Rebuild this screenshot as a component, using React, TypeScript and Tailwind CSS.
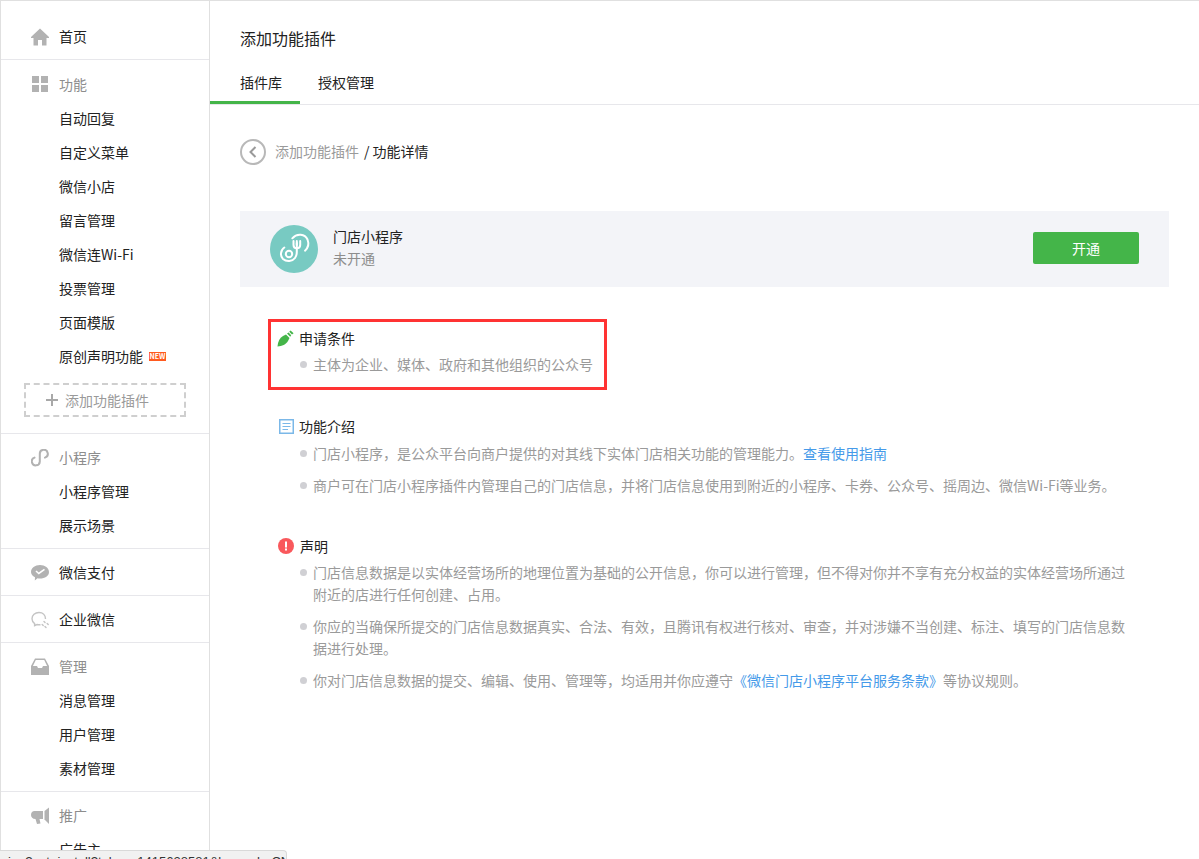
import type { ReactNode } from "react";

const font = '"Noto Sans CJK SC", "Noto Sans", sans-serif';

function Home() {
  return (
    <svg width="18" height="18" viewBox="0 0 18 18" fill="#b2b2b2">
      <path d="M9 0.5 L18 9 L18 10 L15.5 10 L15.5 17.5 L11 17.5 L11 12 L7 12 L7 17.5 L2.5 17.5 L2.5 10 L0 10 L0 9 Z" />
    </svg>
  );
}

function Grid() {
  return (
    <svg width="16" height="16" viewBox="0 0 16 16" fill="#b2b2b2" className="mb-[2px]">
      <rect x="0" y="0" width="7" height="7" />
      <rect x="9" y="0" width="7" height="7" />
      <rect x="0" y="9" width="7" height="7" />
      <rect x="9" y="9" width="7" height="7" />
    </svg>
  );
}

function MiniApp() {
  return (
    <svg width="18" height="18" viewBox="0 0 18 18" fill="none" stroke="#b2b2b2" strokeWidth="2" strokeLinecap="round">
      <path d="M3.5 8.6 A4 4 0 1 0 8.8 12.6 L8.8 5 A4 4 0 1 1 14 8.6" />
    </svg>
  );
}

function Pay() {
  return (
    <svg width="18" height="18" viewBox="0 0 18 18">
      <path d="M9 1 C14 1 18 4 18 8 C18 12 14 14.5 9 14.5 C8 14.5 7 14.3 6.5 14.2 L3.8 16.5 L4 13.3 C1.5 12.1 0 10.2 0 8 C0 4 4 1 9 1 Z" fill="#b2b2b2" />
      <path d="M5 7 L7.8 9.5 L13.5 5.3" fill="none" stroke="#fff" strokeWidth="1.6" />
    </svg>
  );
}

function Wework() {
  return (
    <svg width="18" height="18" viewBox="0 0 18 18" fill="none" stroke="#c4c4c4" strokeWidth="1.4">
      <path d="M14.5 8 C14.5 4 11.8 1.5 8 1.5 C4 1.5 1 4.3 1 7.8 C1 10 2.2 11.6 3.6 12.6 L3.6 14.6 L6 13.5 C7 13.8 8 13.9 9.5 13.7" />
      <path d="M13 10.6 L14 11.6 M16.2 12.6 L17.2 13.6 M11.2 13.6 L12.2 14.6 M14 15.6 L15 16.6" strokeLinecap="round" />
    </svg>
  );
}

function Inbox() {
  return (
    <svg width="18" height="18" viewBox="0 0 18 18" fill="#b2b2b2">
      <path fillRule="evenodd" d="M4 0.5 L14 0.5 L18 8 L18 17 L0 17 L0 8 Z M4.8 2 L1.9 8 L6 8 L7 10 L11 10 L12 8 L16.1 8 L13.2 2 Z" />
    </svg>
  );
}

function Megaphone() {
  return (
    <svg width="18" height="18" viewBox="0 0 18 18" fill="#b2b2b2">
      <path d="M3.5 4 L12 4 L12 12 L8.5 12 L9.5 16.5 L6 17 L4.5 12 C1.5 12 0 10 0 8 C0 5.5 1.5 4 3.5 4 Z" />
      <path d="M13.5 4 L18 0.5 L18 17 L13.5 12.5 Z" />
    </svg>
  );
}

function Section({ icon, label, muted, children }: { icon: ReactNode; label: string; muted?: boolean; children?: ReactNode }) {
  return (
    <div>
      <div className="flex h-[34px] items-center pl-[30px]">
        <span className="mr-[10px] flex w-[18px] justify-center">{icon}</span>
        <span className={`pb-[2px] ${muted ? "text-[#8d8d8d]" : "text-[#222]"}`}>{label}</span>
      </div>
      {children}
    </div>
  );
}

function Item({ children }: { children: ReactNode }) {
  return <div className="flex h-[34px] items-center pb-[2px] pl-[58px] text-[#222]">{children}</div>;
}

function Bullet({ children }: { children: ReactNode }) {
  return (
    <div className="relative pl-[34px] leading-[22px]">
      <span className="absolute left-[21px] top-[8px] h-[7px] w-[7px] rounded-full bg-[#d0d0d4]" />
      {children}
    </div>
  );
}

export default function App() {
  return (
    <div className="relative h-[859px] w-[1199px] overflow-hidden border-t border-t-[#e0e0e0] bg-white text-[14px]" style={{ fontFamily: font }}>
      <div className="flex h-[900px]">
        {/* Sidebar */}
        <aside className="w-[210px] shrink-0 border-x border-x-[#e0e0e0]">
          <div className="border-b border-[#e7e7eb] pb-[5px] pt-[19px]">
            <Section icon={<Home />} label="首页" />
          </div>
          <div className="border-b border-[#e7e7eb] pb-[16px] pt-[8px]">
            <Section icon={<Grid />} label="功能" muted>
              <Item>自动回复</Item>
              <Item>自定义菜单</Item>
              <Item>微信小店</Item>
              <Item>留言管理</Item>
              <Item>微信连Wi-Fi</Item>
              <Item>投票管理</Item>
              <Item>页面模版</Item>
              <Item>
                原创声明功能
                <span className="ml-[6px] flex h-[9px] w-[17px] items-center justify-center bg-[#ff5a1f] text-[7px] font-bold leading-none text-white">NEW</span>
              </Item>
            </Section>
            <div className="ml-[23px] mt-[9px] flex h-[34px] w-[162px] items-center justify-center border-2 border-dashed border-[#cfcfcf] pr-[15px] text-[#9a9a9a]">
              <svg width="12" height="12" viewBox="0 0 12 12" className="mr-[7px]" fill="#a8a8a8">
                <rect x="5" y="0" width="2" height="12" />
                <rect x="0" y="5" width="12" height="2" />
              </svg>
              添加功能插件
            </div>
          </div>
          <div className="border-b border-[#e7e7eb] pb-[5px] pt-[7px]">
            <Section icon={<MiniApp />} label="小程序" muted>
              <Item>小程序管理</Item>
              <Item>展示场景</Item>
            </Section>
          </div>
          <div className="border-b border-[#e7e7eb] pb-[5px] pt-[7px]">
            <Section icon={<Pay />} label="微信支付" />
          </div>
          <div className="border-b border-[#e7e7eb] pb-[5px] pt-[7px]">
            <Section icon={<Wework />} label="企业微信" />
          </div>
          <div className="border-b border-[#e7e7eb] pb-[5px] pt-[7px]">
            <Section icon={<Inbox />} label="管理" muted>
              <Item>消息管理</Item>
              <Item>用户管理</Item>
              <Item>素材管理</Item>
            </Section>
          </div>
          <div className="pt-[7px]">
            <Section icon={<Megaphone />} label="推广" muted>
              <Item>广告主</Item>
            </Section>
          </div>
        </aside>

        {/* Main */}
        <main className="flex-1">
          <div className="border-b border-[#e7e7eb]">
            <h1 className="pl-[30px] pt-[25px] text-[16px] font-normal leading-[24px] text-[#222]">添加功能插件</h1>
            <div className="mt-[13px] flex h-[41px]">
              <div className="w-[90px] border-b-[3px] border-[#44b549] pl-[30px] pt-[9px] leading-[20px] text-[#222]">插件库</div>
              <div className="ml-[18px] pt-[9px] leading-[20px] text-[#222]">授权管理</div>
            </div>
          </div>

          <div className="mt-[34px] flex items-center pl-[30px]">
            <span className="flex h-[26px] w-[26px] items-center justify-center rounded-full border-2 border-[#b8b8b8]">
              <svg width="10" height="12" viewBox="0 0 10 12" fill="none" stroke="#9a9a9a" strokeWidth="2">
                <path d="M7.5 1 L2.5 6 L7.5 11" />
              </svg>
            </span>
            <span className="ml-[9px] pb-[2px] text-[#9a9a9a]">添加功能插件</span>
            <span className="ml-[5px] pb-[2px] text-[#222]">/ 功能详情</span>
          </div>

          <div className="ml-[30px] mt-[46px] flex h-[76px] w-[929px] items-center bg-[#f3f4f8] px-[30px]">
            <svg width="48" height="48" viewBox="0 0 48 48" fill="none" stroke="#fff" strokeWidth="2" strokeLinecap="round" className="shrink-0">
              <circle cx="24" cy="24" r="24" fill="#78cac2" stroke="none" />
              <circle cx="19" cy="29" r="3.2" />
              <path d="M14.3 22.5 C10.5 25 9.8 31 13 34 C16.5 37 22.5 36.5 25 33 C26.5 31 26.8 29 26.8 27 L26.8 18" />
              <path d="M23.5 16 L23.5 20 C23.5 22 25 23.2 26.8 23.2 C28.6 23.2 30.2 22 30.2 20 L30.2 16 M26.8 16 L26.8 20" />
              <path d="M22.3 13.3 C27 8 35 9 37.5 14.5 C39 18.5 38 23 35 25.7" />
            </svg>
            <div className="ml-[15px] flex-1 pb-[4px]">
              <div className="leading-[22px] text-[#222]">门店小程序</div>
              <div className="leading-[22px] text-[#8d8d8d]">未开通</div>
            </div>
            <button className="mb-[2px] h-[32px] w-[106px] rounded-[2px] bg-[#44b549] text-[14px] text-white">开通</button>
          </div>

          <div className="ml-[58px] mt-[32px] h-[71px] w-[339px] border-[3px] border-[#ff3333] pt-[5px] text-[#9a9a9a]">
            <div className="flex h-[22px] items-center pl-[6px] text-[#222]">
              <svg width="17" height="17" viewBox="0 0 17 17" className="mr-[5px]" fill="#44b549">
                <path d="M0.5 16.5 C0.8 12 2.5 8 6 6 L9 4.5 L12.5 8 L11 11 C9 14.5 5 16 0.5 16.5 Z" />
                <path d="M10 3.6 L11.6 2.6 L14.2 5.2 L13.2 6.8 Z M12.2 1.8 L13.6 0.4 L16.6 3.2 L15 4.6 Z" />
              </svg>
              申请条件
            </div>
            <div className="ml-[8px] mt-[4px]"><Bullet>主体为企业、媒体、政府和其他组织的公众号</Bullet></div>
          </div>

          <div className="ml-[69px] mt-[25px] text-[#9a9a9a]">
            <div className="flex h-[22px] items-center text-[#222]">
              <svg width="15" height="15" viewBox="0 0 15 15" className="mr-[5px]" fill="none" stroke="#7bb8e8">
                <rect x="0.75" y="0.75" width="13.5" height="13.5" strokeWidth="1.5" />
                <path d="M3.5 4.5 H11.5 M3.5 7.5 H11.5 M3.5 10.5 H9" strokeWidth="1.2" />
              </svg>
              功能介绍
            </div>
            <div className="mt-[5px] flex w-[854px] flex-col gap-[10px]">
              <Bullet>门店小程序，是公众平台向商户提供的对其线下实体门店相关功能的管理能力。<span className="text-[#459ae9]">查看使用指南</span></Bullet>
              <Bullet>商户可在门店小程序插件内管理自己的门店信息，并将门店信息使用到附近的小程序、卡券、公众号、摇周边、微信Wi-Fi等业务。</Bullet>
            </div>
          </div>

          <div className="ml-[69px] mt-[39px] text-[#9a9a9a]">
            <div className="flex h-[22px] items-center text-[#222]">
              <svg width="16" height="16" viewBox="0 0 16 16" className="-ml-[1px] mr-[6px]">
                <circle cx="8" cy="8" r="8" fill="#f9585c" />
                <rect x="7" y="3.5" width="2" height="6" fill="#fff" />
                <rect x="7" y="10.5" width="2" height="2" fill="#fff" />
              </svg>
              声明
            </div>
            <div className="mt-[4px] flex w-[854px] flex-col gap-[10px]">
              <Bullet>门店信息数据是以实体经营场所的地理位置为基础的公开信息，你可以进行管理，但不得对你并不享有充分权益的实体经营场所通过附近的店进行任何创建、占用。</Bullet>
              <Bullet>你应的当确保所提交的门店信息数据真实、合法、有效，且腾讯有权进行核对、审查，并对涉嫌不当创建、标注、填写的门店信息数据进行处理。</Bullet>
              <Bullet>你对门店信息数据的提交、编辑、使用、管理等，均适用并你应遵守<span className="text-[#459ae9]">《微信门店小程序平台服务条款》</span>等协议规则。</Bullet>
            </div>
          </div>
        </main>
      </div>

      {/* browser status bubble */}
      <div className="absolute bottom-0 left-0 h-[9px] w-[287px] overflow-hidden rounded-tr-[4px] border-r border-t border-[#d9d9d9] bg-[#f1f1f1] pl-[8px] pt-[2px] text-[13px] leading-[18px] text-[#333]" style={{ fontFamily: '"Liberation Sans", sans-serif' }}>
        <div className="whitespace-nowrap">ing?act=install?token=1415628581&amp;lang=zh_CN</div>
      </div>
    </div>
  );
}
